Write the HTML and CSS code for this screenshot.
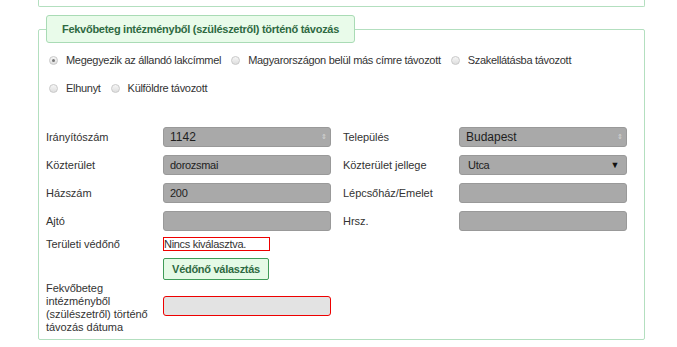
FILE: index.html
```html
<!DOCTYPE html>
<html lang="hu">

<head>
    <meta charset="UTF-8" />
    <meta name="viewport" content="width=device-width, initial-scale=1" />
    <title>Fekvőbeteg intézményből történő távozás</title>
    <link rel="stylesheet" href="styles.css">
</head>

<body>

    <!-- előző szakasz alja -->
    <div class="elozo-szakasz"></div>

    <fieldset class="szakasz">
        <legend>Fekvőbeteg intézményből (szülészetről) történő távozás</legend>

        <div class="radio-sor">
            <label class="radio-opcio"><span class="radio bejelolt"></span>Megegyezik az állandó lakcímmel</label>
            <label class="radio-opcio"><span class="radio"></span>Magyarországon belül más címre távozott</label>
            <label class="radio-opcio"><span class="radio"></span>Szakellátásba távozott</label>
        </div>
        <div class="radio-sor">
            <label class="radio-opcio"><span class="radio"></span>Elhunyt</label>
            <label class="radio-opcio"><span class="radio"></span>Külföldre távozott</label>
        </div>

        <div class="cim-racs">
            <span class="cimke">Irányítószám</span>
            <div class="mezo mezo-arial">1142<span class="kis-nyil">&#8661;</span></div>
            <span class="cimke cimke-jobb">Település</span>
            <div class="mezo mezo-arial">Budapest<span class="kis-nyil">&#8661;</span></div>

            <span class="cimke">Közterület</span>
            <div class="mezo">dorozsmai</div>
            <span class="cimke cimke-jobb">Közterület jellege</span>
            <div class="mezo mezo-select">Utca<span class="nyil">&#9660;</span></div>

            <span class="cimke">Házszám</span>
            <div class="mezo">200</div>
            <span class="cimke cimke-jobb">Lépcsőház/Emelet</span>
            <div class="mezo"></div>

            <span class="cimke">Ajtó</span>
            <div class="mezo"></div>
            <span class="cimke cimke-jobb">Hrsz.</span>
            <div class="mezo"></div>
        </div>

        <div class="sor vedono-sor">
            <span class="cimke">Területi védőnő</span>
            <div class="vedono-mezo">Nincs kiválasztva.</div>
        </div>

        <div class="sor gomb-sor">
            <span class="cimke"></span>
            <button class="zold-gomb" type="button">Védőnő választás</button>
        </div>

        <div class="sor datum-sor">
            <span class="cimke">Fekvőbeteg intézményből (szülészetről) történő távozás dátuma</span>
            <div class="mezo datum-mezo"></div>
        </div>
    </fieldset>

</body>

</html>
```

FILE: styles.css
```css
body {
    margin: 0;
    background-color: white;
    font-family: Tahoma, "Liberation Sans", Arial, sans-serif;
    font-size: 11px;
    letter-spacing: -0.3px;
    color: #333333;
}

.elozo-szakasz {
    height: 6px;
    margin: 0 32px 0 38px;
    border: 1px solid #b3dfbf;
    border-top: none;
    border-radius: 0 0 2px 2px;
}

.szakasz {
    margin: 8px 32px 0 38px;
    padding: 3px 8px 5px 7px;
    border: 1px solid #b3dfbf;
    border-radius: 2px;
    min-width: 0;
}

.szakasz legend {
    margin: 0;
    padding: 0 15px;
    height: 26px;
    line-height: 26px;
    background-color: #e9fbea;
    border: 1px solid #a9dbb5;
    border-radius: 3px;
    font-weight: bold;
    letter-spacing: -0.28px;
    color: #2f6a42;
}

.radio-sor {
    display: flex;
    align-items: center;
    height: 28px;
}

.radio-opcio {
    display: flex;
    align-items: center;
    margin-right: 7px;
    white-space: nowrap;
}

.radio {
    width: 7px;
    height: 7px;
    margin: 0 8px 0 3px;
    border: 1px solid #c9c9c9;
    border-radius: 50%;
    background: linear-gradient(#f6f6f6, #dedede);
    position: relative;
}

.radio.bejelolt::after {
    content: "";
    position: absolute;
    left: 2px;
    top: 2px;
    width: 3px;
    height: 3px;
    border-radius: 50%;
    background-color: #777777;
}

/* cím adatok */
.cim-racs {
    display: grid;
    grid-template-columns: 117px 168px 128px 168px;
    row-gap: 8px;
    align-items: center;
    margin-top: 25px;
}

.cimke {
    letter-spacing: -0.05px;
}

.cimke-jobb {
    padding-left: 12px;
}

.mezo {
    height: 18px;
    line-height: 18px;
    padding: 0 6px;
    background-color: #a9a9a9;
    border: 1px solid #999999;
    border-radius: 3px;
    color: #222222;
    position: relative;
}

.mezo-arial {
    font-family: "Liberation Sans", Arial, sans-serif;
    font-size: 12px;
    letter-spacing: normal;
    color: #1e1e1e;
}

.kis-nyil {
    position: absolute;
    right: 3px;
    top: 0;
    font-size: 7px;
    color: #d8d8d8;
}

.mezo-select {
    padding-left: 8px;
}

.nyil {
    position: absolute;
    right: 7px;
    top: 0;
    font-size: 9px;
    color: #111111;
}

.sor {
    display: flex;
    align-items: center;
}

.sor .cimke {
    width: 117px;
    flex-shrink: 0;
}

.vedono-sor {
    margin-top: 6px;
}

.vedono-mezo {
    width: 105px;
    height: 12px;
    line-height: 12px;
    border: 1px solid #ee0000;
    font-size: 11px;
    color: #333333;
}

.gomb-sor {
    margin-top: 7px;
}

.zold-gomb {
    width: 106px;
    height: 22px;
    padding: 0;
    background-color: #e5fae6;
    border: 1px solid #3f9b58;
    border-radius: 2px;
    font-family: inherit;
    font-size: 11px;
    font-weight: bold;
    letter-spacing: -0.28px;
    color: #2f6a42;
    cursor: pointer;
}

.zold-gomb:hover {
    background-color: #d4f3d6;
}

.datum-sor {
    align-items: flex-start;
    margin-top: 2px;
}

.datum-sor .cimke {
    width: 110px;
    padding-right: 7px;
    line-height: 13px;
}

.datum-mezo {
    width: 154px;
    margin-top: 14px;
    background-color: #e3e3e3;
    border: 1px solid #ee0000;
}
```
